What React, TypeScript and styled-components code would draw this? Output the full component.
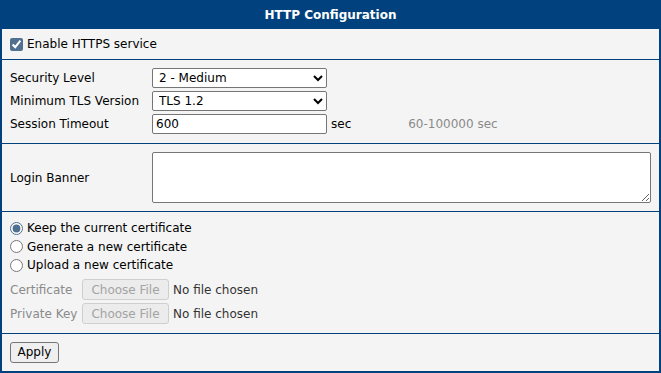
import React from 'react'
import styled, { createGlobalStyle } from 'styled-components'

const GlobalStyle = createGlobalStyle`
    html, body {
        margin: 0;
        padding: 0;
        background: #ffffff;
    }
    body {
        font-family: 'DejaVu Sans', Verdana, sans-serif;
        font-size: 12px;
        color: #000;
    }
`

const blue = '#01427e'

const Panel = styled.div`
    width: 661px;
    height: 373px;
    box-sizing: border-box;
    border: 2px solid ${blue};
    border-top: none;
    background: #f4f4f4;
    display: flex;
    flex-direction: column;
`

const Header = styled.div`
    height: 29px;
    margin: 0 -2px;
    background: ${blue};
    color: #fff;
    font-weight: bold;
    font-size: 12px;
    display: flex;
    align-items: center;
    justify-content: center;
`

const Section = styled.div<{ pad?: string; grow?: boolean }>`
    padding: ${({ pad }) => pad || '8px'};
    & + & {
        border-top: 1px solid ${blue};
    }
    ${({ grow }) => (grow ? 'flex: 1;' : '')}
`

const CheckRow = styled.label<{ h?: number }>`
    display: flex;
    align-items: center;
    gap: 4px;
    height: ${({ h }) => h || 18}px;
    cursor: default;

    input {
        margin: 0;
        width: 13px;
        height: 13px;
        accent-color: #50708f;
    }
`

const FormGrid = styled.div`
    display: grid;
    grid-template-columns: 142px 175px auto 1fr;
    grid-auto-rows: 23px;
    align-items: start;
`

const Label = styled.span<{ muted?: boolean }>`
    line-height: 20px;
    color: ${({ muted }) => (muted ? '#8a8a8a' : '#000')};
`

const Select = styled.select`
    box-sizing: border-box;
    width: 175px;
    height: 20px;
    margin: 0;
    padding: 0 2px;
    font-family: 'DejaVu Sans', Verdana, sans-serif;
    font-size: 12px;
    color: #000;
    background: #fff;
    border: 1px solid #767676;
    border-radius: 2px;
`

const TextInput = styled.input`
    box-sizing: border-box;
    width: 175px;
    height: 20px;
    margin: 0;
    padding: 0 3px;
    font-family: 'DejaVu Sans', Verdana, sans-serif;
    font-size: 12px;
    border: 1px solid #767676;
    border-radius: 2px;
    background: #fff;
`

const Unit = styled.span`
    line-height: 20px;
    padding-left: 4px;
`

const Hint = styled.span`
    line-height: 20px;
    padding-left: 57px;
    color: #8a8a8a;
`

const BannerRow = styled.div`
    display: grid;
    grid-template-columns: 142px 1fr;
    align-items: center;
`

const TextArea = styled.textarea`
    box-sizing: border-box;
    width: 499px;
    height: 51px;
    margin: 0;
    border: 1px solid #767676;
    border-radius: 2px;
    background: #fff;
    resize: both;
    font-family: 'DejaVu Sans', Verdana, sans-serif;
    font-size: 12px;
`

const RadioRow = styled.label`
    display: flex;
    align-items: center;
    gap: 4px;
    height: 18.5px;

    input {
        margin: 0;
        width: 13px;
        height: 13px;
        accent-color: #50708f;
    }
`

const FileGrid = styled.div`
    display: grid;
    grid-template-columns: 72px auto 1fr;
    grid-auto-rows: 24px;
    align-items: center;
    margin-top: 3px;
`

const FileButton = styled.button`
    box-sizing: border-box;
    width: 87px;
    height: 21px;
    margin: 0;
    padding: 0;
    font-family: 'DejaVu Sans', Verdana, sans-serif;
    font-size: 12px;
    color: #a3a3a3;
    background: #ececec;
    border: 1px solid #cfcfcf;
    border-radius: 3px;
`

const FileName = styled.span`
    padding-left: 4px;
    color: #333;
`

const ApplyButton = styled.button`
    box-sizing: border-box;
    width: 49px;
    height: 21px;
    margin: 0;
    padding: 0;
    font-family: 'DejaVu Sans', Verdana, sans-serif;
    font-size: 12px;
    color: #000;
    background: #efefef;
    border: 1px solid #767676;
    border-radius: 3px;
`

const App: React.FC = () => {
  return (
    <>
      <GlobalStyle />
      <Panel>
        <Header>HTTP Configuration</Header>

        <Section pad="6px 8px 6px">
          <CheckRow h={18}>
            <input type="checkbox" defaultChecked />
            Enable HTTPS service
          </CheckRow>
        </Section>

        <Section pad="8px 8px 6px">
          <FormGrid>
            <Label>Security Level</Label>
            <Select defaultValue="2">
              <option value="1">1 - Low</option>
              <option value="2">2 - Medium</option>
              <option value="3">3 - High</option>
            </Select>
            <span />
            <span />

            <Label>Minimum TLS Version</Label>
            <Select defaultValue="1.2">
              <option value="1.0">TLS 1.0</option>
              <option value="1.1">TLS 1.1</option>
              <option value="1.2">TLS 1.2</option>
              <option value="1.3">TLS 1.3</option>
            </Select>
            <span />
            <span />

            <Label>Session Timeout</Label>
            <TextInput defaultValue="600" />
            <Unit>sec</Unit>
            <Hint>60-100000 sec</Hint>
          </FormGrid>
        </Section>

        <Section pad="8px">
          <BannerRow>
            <Label>Login Banner</Label>
            <TextArea />
          </BannerRow>
        </Section>

        <Section pad="7px 8px 7px">
          <RadioRow>
            <input type="radio" name="cert" defaultChecked />
            Keep the current certificate
          </RadioRow>
          <RadioRow>
            <input type="radio" name="cert" />
            Generate a new certificate
          </RadioRow>
          <RadioRow>
            <input type="radio" name="cert" />
            Upload a new certificate
          </RadioRow>
          <FileGrid>
            <Label muted>Certificate</Label>
            <FileButton disabled>Choose File</FileButton>
            <FileName>No file chosen</FileName>

            <Label muted>Private Key</Label>
            <FileButton disabled>Choose File</FileButton>
            <FileName>No file chosen</FileName>
          </FileGrid>
        </Section>

        <Section pad="8px" grow>
          <ApplyButton>Apply</ApplyButton>
        </Section>
      </Panel>
    </>
  )
}

export default App
